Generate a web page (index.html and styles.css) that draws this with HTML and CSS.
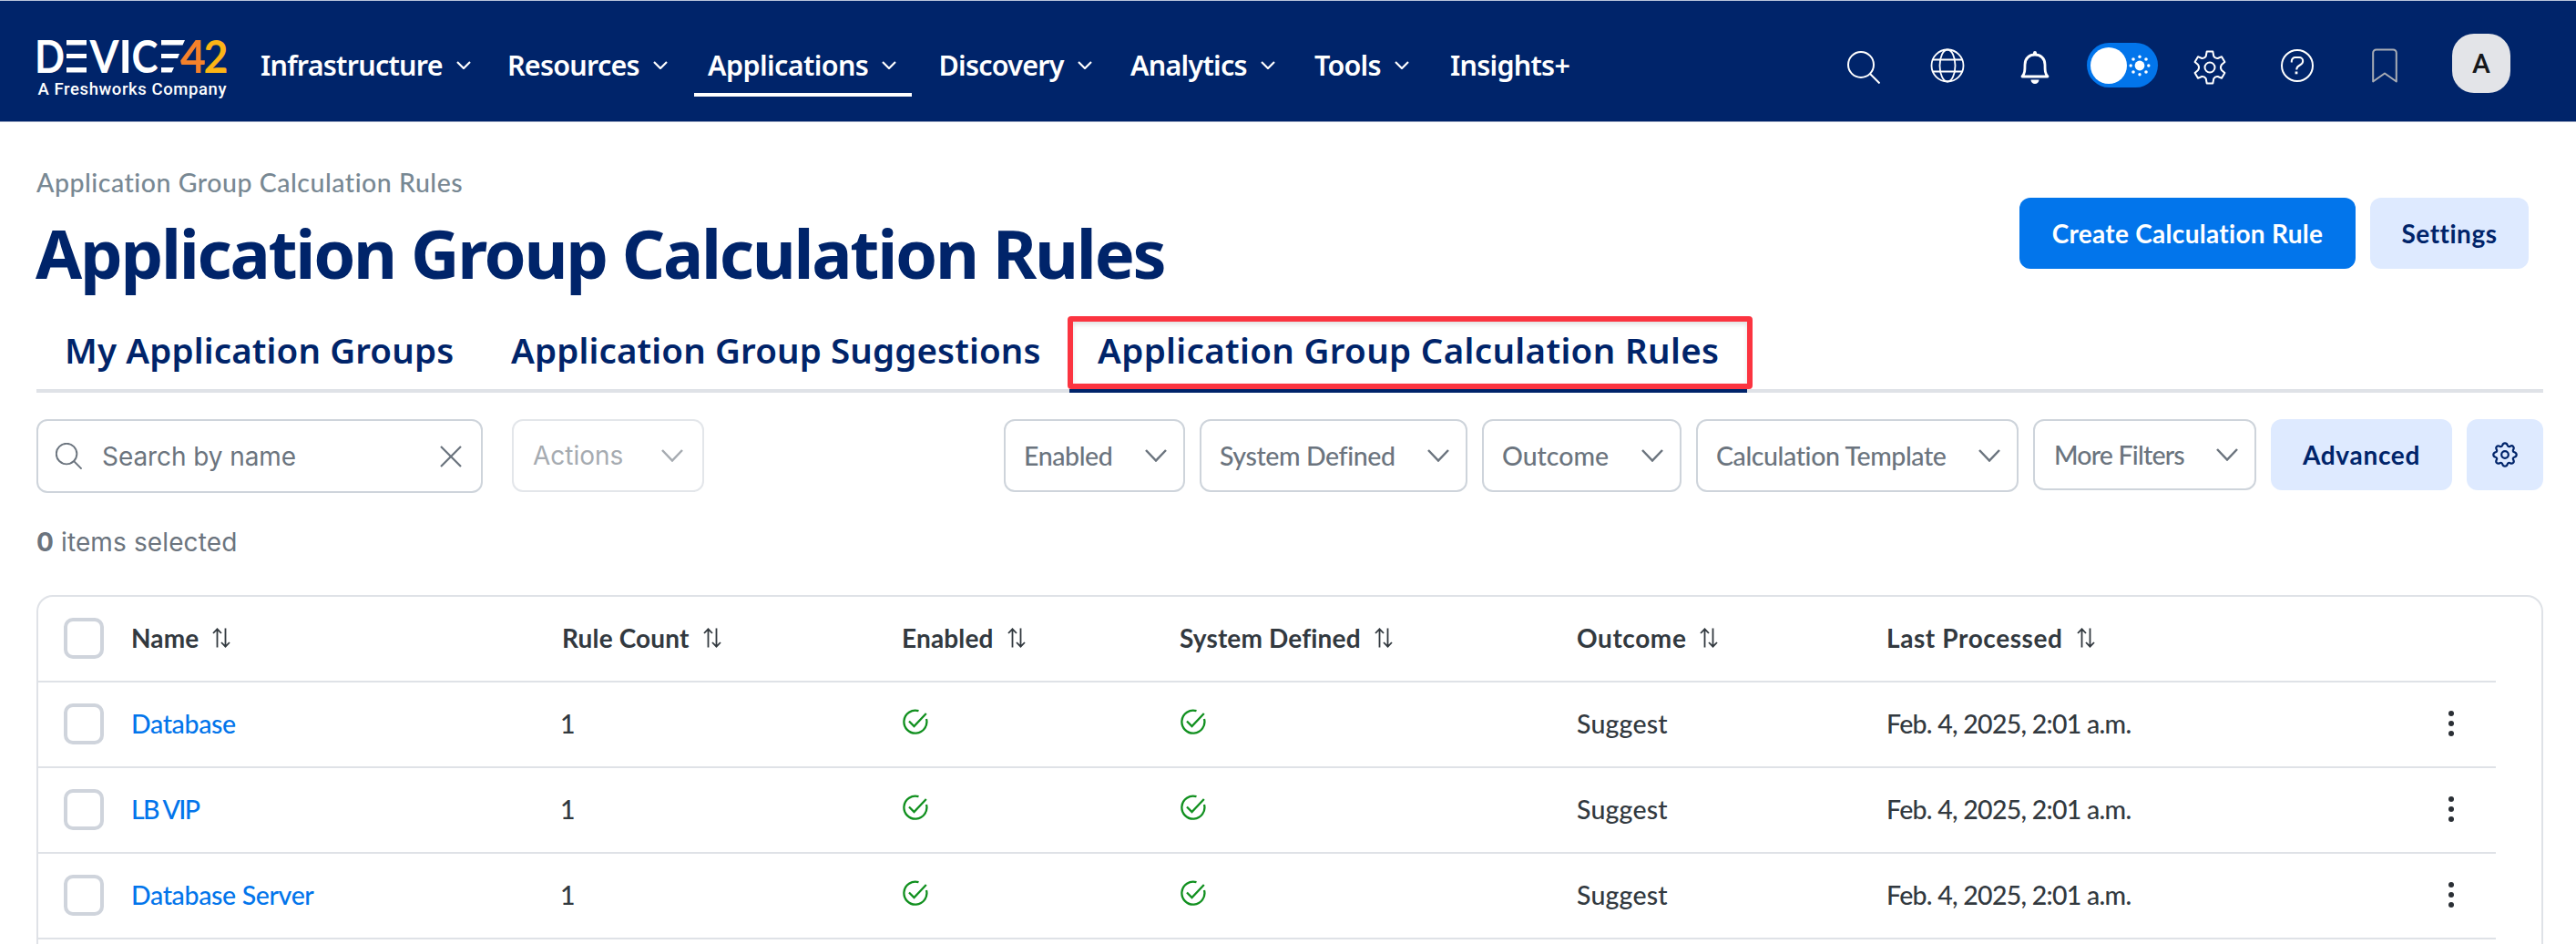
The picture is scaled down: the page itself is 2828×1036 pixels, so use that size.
FILE: index.html
```html
<!DOCTYPE html>
<html lang="en">
<head>
<meta charset="utf-8">
<title>Application Group Calculation Rules</title>
<link rel="stylesheet" href="styles.css">
</head>
<body>
<svg class="defs" width="0" height="0" aria-hidden="true">
  <symbol id="chev" viewBox="0 0 16 9"><path d="M1 1l7 7 7-7" fill="none" stroke="currentColor" stroke-width="2.200"/></symbol>
  <symbol id="chev-lg" viewBox="0 0 24 14"><path d="M1 1l11 11.5L23 1" fill="none" stroke="currentColor" stroke-width="2.500"/></symbol>
  <symbol id="glass" viewBox="0 0 36 36"><g fill="none" stroke="currentColor"><circle cx="15" cy="15" r="14"/><path d="M25 25l10.5 10.5"/></g></symbol>
  <symbol id="sort" viewBox="0 0 20 22"><path d="M5.5 21.5V1.5M1 6l4.5-4.7L10 6M14.5.5v20M10 16l4.500 4.700L19 16" fill="none" stroke="currentColor" stroke-width="1.8"/></symbol>
  <symbol id="check" viewBox="0 0 28 28"><path d="M17.500 2.200A12.500 12.500 0 1 0 26 11M7 13.500l5.500 5.500L25.800 5" fill="none" stroke="currentColor" stroke-width="2.300"/></symbol>
  <symbol id="dots" viewBox="0 0 8 30"><g fill="currentColor"><circle cx="4" cy="4" r="3"/><circle cx="4" cy="15" r="3"/><circle cx="4" cy="26" r="3"/></g></symbol>
</svg>

<header class="topbar">
  <svg class="logo" width="232" height="104" viewBox="28 20 232 104">
    <g class="logo-word" fill="#fff">
      <text x="38" y="80.500" textLength="33" lengthAdjust="spacingAndGlyphs">D</text>
      <text x="98.500" y="80.500" textLength="32" lengthAdjust="spacingAndGlyphs">V</text>
      <text x="130.500" y="80.500">I</text>
      <text x="144.500" y="80.500" textLength="29" lengthAdjust="spacingAndGlyphs">C</text>
      <path d="M73 45h22v5.500H73zM73 60h22v5H73zM73 75h22v5.500H73zM177 45h26l-2.500 5.500H177zM177 60h20l-2 5h-18zM177 75h14l-2.500 5.500H177z"/>
    </g>
    <g class="logo-word"><text x="198" y="80.500" fill="#f5812a" textLength="28" lengthAdjust="spacingAndGlyphs">4</text><text x="223.500" y="80.500" fill="#fdb515" textLength="27" lengthAdjust="spacingAndGlyphs">2</text></g>
    <text class="logo-sub" x="41.500" y="105" fill="#fff" textLength="207">A Freshworks Company</text>
  </svg>
  <nav class="nav">
    <a class="nav-item first">Infrastructure<svg width="16" height="9"><use href="#chev"/></svg></a>
    <a class="nav-item">Resources<svg width="16" height="9"><use href="#chev"/></svg></a>
    <a class="nav-item active">Applications<svg width="16" height="9"><use href="#chev"/></svg></a>
    <a class="nav-item">Discovery<svg width="16" height="9"><use href="#chev"/></svg></a>
    <a class="nav-item">Analytics<svg width="16" height="9"><use href="#chev"/></svg></a>
    <a class="nav-item">Tools<svg width="16" height="9"><use href="#chev"/></svg></a>
    <a class="nav-item">Insights+</a>
  </nav>
  <div class="tools">
    <svg class="tool-search" width="36" height="36"><use href="#glass"/></svg>
    <svg width="38" height="38" viewBox="0 0 38 38" fill="none" stroke="#fff" stroke-width="1.8"><circle cx="19" cy="19" r="17.500"/><ellipse cx="19" cy="19" rx="8.500" ry="17.500"/><path d="M3 12.500h32M3 25.500h32"/></svg>
    <svg class="low" width="32" height="36" viewBox="0 0 32 36"><path d="M2 28c3-3.500 3-7 3-13C5 8 10 4 16 4s11 4 11 11c0 6 0 9.500 3 13z" fill="none" stroke="#fff" stroke-width="2.800" stroke-linejoin="round"/><path d="M14 4.500V2a2 2 0 0 1 4 0v2.500zM11.500 31.500h9a4.500 4.500 0 0 1-9 0z" fill="#fff"/></svg>
    <div class="toggle"><span class="knob"></span>
      <svg width="24" height="24" viewBox="0 0 24 24" fill="#fff"><circle cx="12" cy="12" r="5.400"/><circle cx="12" cy="2.200" r="1.700"/><circle cx="12" cy="21.800" r="1.700"/><circle cx="2.200" cy="12" r="1.700"/><circle cx="21.800" cy="12" r="1.700"/><circle cx="5" cy="5" r="1.800"/><circle cx="19" cy="5" r="1.800"/><circle cx="5" cy="19" r="1.800"/><circle cx="19" cy="19" r="1.800"/></svg>
    </div>
    <svg class="low" width="36" height="38" viewBox="0 0 36 38" fill="none" stroke="#fff" stroke-width="2" stroke-linejoin="round"><path d="M14.700 1.500h6.600l1 5.300c.9 1.600 2.600 2.500 4.500 2.200l4.200-1.800 3.400 5.800-3.500 3c-1.200 1.800-1.200 4.200 0 6l3.500 3-3.400 5.800-4.200-1.800c-1.900-.3-3.600.6-4.500 2.200l-1 5.300h-6.600l-1-5.300c-.9-1.600-2.600-2.500-4.500-2.200L5 30.800 1.600 25l3.500-3c1.200-1.800 1.200-4.200 0-6l-3.500-3L5 7.200 9.200 9c1.900.3 3.600-.6 4.500-2.200z"/><circle cx="18" cy="19" r="5.500"/></svg>
    <svg width="38" height="38" viewBox="0 0 38 38" fill="none" stroke="#fff" stroke-width="2"><circle cx="19" cy="19" r="17"/><path d="M12.800 15.500v-1.500a4 4 0 0 1 4-4h4.400a4 4 0 0 1 4 4c0 5.500-7 3.500-7 9.500"/><path d="M18 25.500v2.800" stroke-width="2.800"/></svg>
    <svg width="28" height="38" viewBox="0 0 28 38" fill="none" stroke="#a9adb5" stroke-width="2" stroke-linejoin="round"><path d="M1.200 36.500V5a3.500 3.500 0 0 1 3.500-3.500h18.600A3.500 3.500 0 0 1 26.800 5v31.500L14 27.500z"/></svg>
    <span class="avatar">A</span>
  </div>
</header>

<main class="page">
  <div class="page-head">
    <div>
      <div class="crumb">Application Group Calculation Rules</div>
      <h1 class="title">Application Group Calculation Rules</h1>
    </div>
    <div class="head-actions">
      <button class="btn primary">Create Calculation Rule</button>
      <button class="btn soft">Settings</button>
    </div>
  </div>

  <div class="tabs">
    <a class="tab tab-groups">My Application Groups</a>
    <a class="tab tab-suggest">Application Group Suggestions</a>
    <a class="tab current">Application Group Calculation Rules<span class="marker"></span></a>
  </div>

  <div class="toolbar">
    <div class="search"><svg width="29" height="29"><use href="#glass"/></svg><span>Search by name</span>
      <svg class="clear" width="24" height="24" viewBox="0 0 24 24"><path d="M1 1l22 22M23 1L1 23" stroke="currentColor" stroke-width="2.200"/></svg></div>
    <div class="select actions">Actions<svg width="24" height="14"><use href="#chev-lg"/></svg></div>
    <div class="filters">
      <div class="select f-enabled">Enabled<svg width="24" height="14"><use href="#chev-lg"/></svg></div>
      <div class="select f-system">System Defined<svg width="24" height="14"><use href="#chev-lg"/></svg></div>
      <div class="select f-outcome">Outcome<svg width="24" height="14"><use href="#chev-lg"/></svg></div>
      <div class="select f-template">Calculation Template<svg width="24" height="14"><use href="#chev-lg"/></svg></div>
      <div class="select f-more">More Filters<svg width="24" height="14"><use href="#chev-lg"/></svg></div>
      <button class="btn soft advanced">Advanced</button>
      <button class="btn soft cog" aria-label="Columns"><svg width="28" height="28" viewBox="0 0 28 28" fill="none" stroke="#00246a" stroke-width="2.200" stroke-linejoin="round"><path d="M14 1.300c2 0 2.400 1 2.800 2.400.4 1.500 1.700 1.800 2.900 1.100 1.300-.8 2.300-.9 3.300.2s1 2 .2 3.300c-.7 1.200-.4 2.500 1.100 2.900 1.400.4 2.400.8 2.400 2.800s-1 2.400-2.400 2.800c-1.500.4-1.800 1.700-1.100 2.900.8 1.300.8 2.300-.2 3.300s-2 1-3.300.2c-1.200-.7-2.500-.4-2.900 1.100-.4 1.400-.8 2.400-2.800 2.400s-2.400-1-2.800-2.400c-.4-1.500-1.700-1.800-2.900-1.100-1.300.8-2.300.8-3.300-.2s-1-2-.2-3.300c.7-1.200.4-2.500-1.100-2.900C2.300 16.400 1.300 16 1.300 14s1-2.400 2.400-2.800c1.500-.4 1.800-1.700 1.100-2.900C4 7 4 6 5 5s2-1 3.300-.2c1.200.7 2.500.4 2.900-1.100.4-1.400.8-2.400 2.800-2.400z"/><circle cx="14" cy="14" r="3.800"/></svg></button>
    </div>
  </div>

  <div class="selected"><b>0</b> items selected</div>

  <section class="grid">
    <div class="row head">
      <span class="box"></span>
      <span>Name<svg width="20" height="22"><use href="#sort"/></svg></span>
      <span>Rule Count<svg width="20" height="22"><use href="#sort"/></svg></span>
      <span>Enabled<svg width="20" height="22"><use href="#sort"/></svg></span>
      <span>System Defined<svg width="20" height="22"><use href="#sort"/></svg></span>
      <span class="wide">Outcome<svg width="20" height="22"><use href="#sort"/></svg></span>
      <span class="wide">Last Processed<svg width="20" height="22"><use href="#sort"/></svg></span>
    </div>
    <div class="row">
      <span class="box"></span><a class="link">Database</a><span class="count">1</span>
      <svg class="ok" width="28" height="28"><use href="#check"/></svg><svg class="ok" width="28" height="28"><use href="#check"/></svg>
      <span class="outcome">Suggest</span><span class="date">Feb. 4, 2025, 2:01 a.m.</span><svg class="menu" width="8" height="30"><use href="#dots"/></svg>
    </div>
    <div class="row">
      <span class="box"></span><a class="link tight">LB VIP</a><span class="count">1</span>
      <svg class="ok" width="28" height="28"><use href="#check"/></svg><svg class="ok" width="28" height="28"><use href="#check"/></svg>
      <span class="outcome">Suggest</span><span class="date">Feb. 4, 2025, 2:01 a.m.</span><svg class="menu" width="8" height="30"><use href="#dots"/></svg>
    </div>
    <div class="row">
      <span class="box"></span><a class="link">Database Server</a><span class="count">1</span>
      <svg class="ok" width="28" height="28"><use href="#check"/></svg><svg class="ok" width="28" height="28"><use href="#check"/></svg>
      <span class="outcome">Suggest</span><span class="date">Feb. 4, 2025, 2:01 a.m.</span><svg class="menu" width="8" height="30"><use href="#dots"/></svg>
    </div>
  </section>
</main>
</body>
</html>
```

FILE: styles.css
```css
:root {
  --navy: #00246a;
  --blue: #0275eb;
  --soft: #deeaff;
  --ink: #32393f;
  --muted: #6b747e;
  --line: #dfe2e7;
  --body: Lato, "Liberation Sans", sans-serif;
  --heading: "Noto Sans", "Open Sans", sans-serif;
}
* { box-sizing: border-box; }
body {
  margin: 0;
  height: 1036px;
  overflow: hidden;
  background: #fff;
  color: var(--ink);
  font: 500 28.5px var(--body);
}
.defs { position: absolute; }
svg { display: block; flex: none; }

/* Top bar */
.topbar {
  display: flex;
  height: 134px;
  padding: 0 46px 0 28px;
  background: var(--navy);
  border-top: 1px solid #b9c4da;
  border-bottom: 1px solid #8d9bba;
  color: #fff;
}
.logo { margin-top: 18px; }
.logo-word { font: 700 49px Lato, sans-serif; }
.logo-sub { font: 500 18.5px Roboto, sans-serif; }
.nav {
  display: grid;
  grid-template-columns: 272px 219px 254.5px 208.5px 202px 151px 160px;
  justify-items: start;
  margin-left: 11px;
  padding-top: 35px;
}
.nav-item {
  display: flex;
  align-items: center;
  gap: 15px;
  height: 70px;
  padding: 3px 16px 0 14px;
  border-bottom: 4px solid transparent;
  font: 600 30.5px var(--heading);
  letter-spacing: -.75px;
  white-space: nowrap;
}
.nav-item.first { padding-left: 15px; }
.nav-item:nth-child(n+5) { padding-left: 16px; }
.nav-item:last-child { padding-left: 14px; }
.nav-item svg { margin-top: 2px; }
.nav-item.active { border-color: #fff; padding: 3px 17px 0 15px; letter-spacing: -.6px; }
.tools {
  display: grid;
  grid-template-columns: repeat(7, 96px) 116px;
  align-items: center;
  justify-items: center;
  height: 141px;
  margin-left: auto;
}
.tool-search { margin: 5px 0 0 8px; stroke-width: 2; }
.low { margin-top: 4px; }
.toggle {
  display: flex;
  align-items: center;
  gap: 2px;
  width: 78px;
  height: 49px;
  padding-left: 4px;
  border-radius: 25px;
  background: var(--blue);
}
.knob { width: 40px; height: 40px; border-radius: 50%; background: #fff; }
.avatar {
  width: 64px;
  height: 65px;
  margin-top: -4px;
  border-radius: 24px;
  background: #e3e4e8;
  color: #16181b;
  font: 500 30px/65px Roboto, sans-serif;
  text-align: center;
}

/* Page head */
.page { padding: 46px 36px 0 40px; }
.page-head { display: flex; justify-content: space-between; }
.crumb { color: #788893; letter-spacing: .52px; line-height: 40px; }
.title {
  margin: 8px 0 0 -1px;
  color: var(--navy);
  font: 700 74px/100px var(--heading);
  letter-spacing: -2.28px;
  white-space: nowrap;
}
.head-actions { display: flex; gap: 16px; padding: 37px 16px 0 0; }
.btn {
  height: 78px;
  padding: 0;
  border: 0;
  border-radius: 12px;
  font: 700 28px var(--body);
}
.primary { width: 369px; background: var(--blue); color: #fff; letter-spacing: .3px; }
.soft { width: 174px; background: var(--soft); color: var(--navy); letter-spacing: .5px; }

/* Tabs */
.tabs {
  display: flex;
  height: 90px;
  margin-top: 13px;
  border-bottom: 4px solid var(--line);
}
.tab {
  height: 90px;
  color: var(--navy);
  font: 600 38.5px/87px var(--heading);
  letter-spacing: .12px;
  white-space: nowrap;
}
.tab-groups { width: 521px; padding-left: 31px; }
.tab-suggest { width: 613px; }
.tab.current {
  position: relative;
  width: 744px;
  padding-left: 31px;
  border-bottom: 4px solid var(--navy);
  letter-spacing: .33px;
}
.marker {
  position: absolute;
  inset: 6px -6px 0 -2px;
  border: 6px solid #fb3440;
  border-radius: 4px;
  box-shadow: inset 0 3px 5px rgba(0, 0, 0, .12);
}

/* Toolbar */
.toolbar { display: flex; margin-top: 29px; }
.search, .select {
  display: flex;
  align-items: center;
  height: 80px;
  border: 2px solid #ced4db;
  border-radius: 12px;
  color: var(--muted);
  white-space: nowrap;
}
.search {
  width: 490px;
  height: 81px;
  padding: 0 21px 0 19px;
  font: 400 28px Inter, sans-serif;
}
.search svg { stroke-width: 2.4; }
.search span { margin-left: 22px; letter-spacing: -.08px; }
.search .clear { margin-left: auto; }
.select { justify-content: space-between; padding: 0 18px 0 20px; letter-spacing: -.4px; }
.select svg { margin-top: -1px; }
.actions {
  width: 211px;
  margin-left: 32px;
  padding: 0 21px 0 21px;
  border-color: #e3e6ea;
  color: #a6abb1;
  font: 400 28px Inter, sans-serif;
  letter-spacing: 0;
}
.filters { display: flex; gap: 16px; margin-left: auto; }
.f-enabled { width: 199px; }
.f-system { width: 294px; }
.f-outcome { width: 219px; letter-spacing: 0; }
.f-template { width: 354px; }
.f-more { width: 245px; height: 78px; letter-spacing: -.8px; padding-left: 21px; }
.advanced { width: 199px; letter-spacing: .7px; }
.cog { display: grid; place-items: center; width: 84px; }

.selected {
  margin-top: 34px;
  color: var(--muted);
  font: 400 28px/40px Inter, sans-serif;
  letter-spacing: .12px;
}

/* Table */
.grid {
  height: 420px;
  margin-top: 38px;
  border: 2px solid var(--line);
  border-radius: 18px 18px 0 0;
}
.row {
  display: grid;
  grid-template-columns: 74px 473px 373px 305px 436px 340px 616px 1fr;
  align-items: center;
  width: 2698px;
  height: 94px;
  padding: 0 0 2px 28px;
  border-bottom: 2px solid var(--line);
  line-height: 38px;
}
.row > span, .link { display: flex; align-items: center; gap: 15px; }
.row > .date { letter-spacing: -.73px; }
.head { font-weight: 700; font-size: 28px; letter-spacing: .15px; }
.head > .wide { letter-spacing: .6px; }
.row > .box { width: 44px; height: 45px; border: 4px solid #cfd4dc; border-radius: 10px; }
.row > .count { margin-left: -2px; }
.row > .outcome { letter-spacing: .2px; }
.link { color: var(--blue); letter-spacing: -.35px; }
.link.tight { letter-spacing: -1.6px; }
.ok { margin: -5px 0 0 1px; color: #11901f; }
.menu { color: #2b3036; }
```
